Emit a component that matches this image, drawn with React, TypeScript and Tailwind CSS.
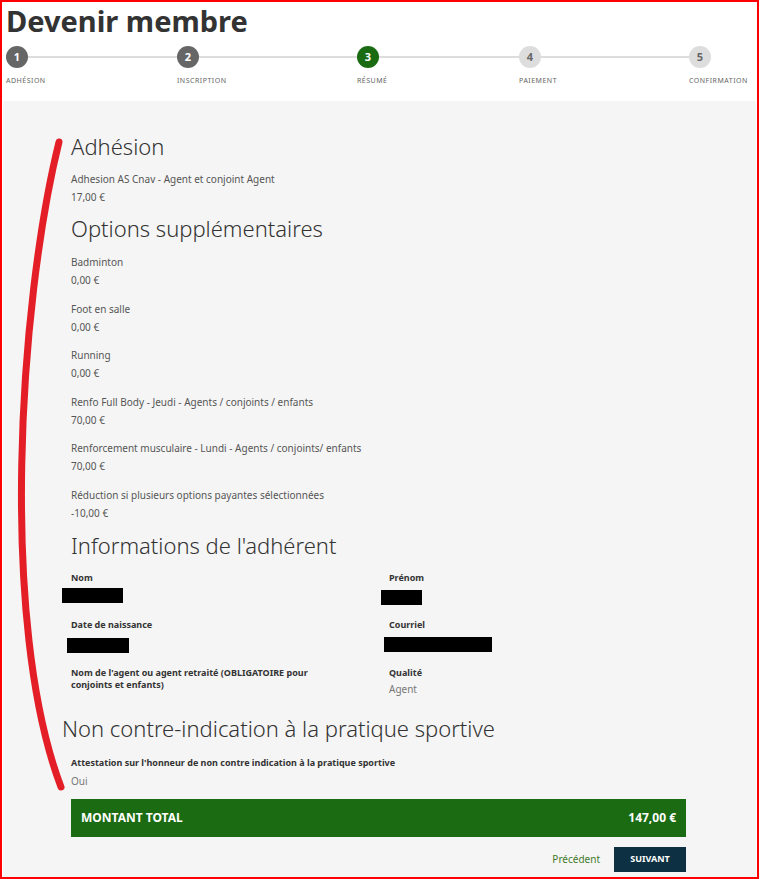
import React from 'react'

const steps = [
  { n: 1, label: 'ADHÉSION', w: 'w-[42px]', state: 'done' },
  { n: 2, label: 'INSCRIPTION', w: 'w-[51px]', state: 'done' },
  { n: 3, label: 'RÉSUMÉ', w: 'w-[33px]', state: 'active' },
  { n: 4, label: 'PAIEMENT', w: 'w-[41px]', state: 'todo' },
  { n: 5, label: 'CONFIRMATION', w: 'w-[62px]', state: 'todo' },
]

const options = [
  { label: 'Badminton', price: '0,00 €' },
  { label: 'Foot en salle', price: '0,00 €' },
  { label: 'Running', price: '0,00 €' },
  { label: 'Renfo Full Body - Jeudi - Agents / conjoints / enfants', price: '70,00 €' },
  { label: 'Renforcement musculaire - Lundi - Agents / conjoints/ enfants', price: '70,00 €' },
  { label: 'Réduction si plusieurs options payantes sélectionnées', price: '-10,00 €' },
]

const Item = ({ label, price }: { label: string; price: string }) => (
  <div className="mb-[10.6px]">
    <div className="h-[18px] leading-[18px] text-[10px] text-[#555]">{label}</div>
    <div className="h-[18px] leading-[18px] text-[10px] text-[#555]">{price}</div>
  </div>
)

const Heading = ({ children, className = '' }: { children: React.ReactNode; className?: string }) => (
  <h2 className={`text-[22px] font-light leading-[30px] text-[#333] ${className}`}>{children}</h2>
)

const Field = ({ label, children }: { label: React.ReactNode; children?: React.ReactNode }) => (
  <div className="mb-[14px]">
    <div className="text-[9px] font-bold leading-[12px] text-[#333]">{label}</div>
    {children}
  </div>
)

const Redacted = ({ w, ml, mt = 'mt-[5px]' }: { w: string; ml: string; mt?: string }) => (
  <div className={`h-[15px] bg-black ${w} ${ml} ${mt}`} />
)

export default function App() {
  return (
    <div className="relative w-[759px] h-[879px] border-2 border-[#ff0000] bg-white font-['Noto_Sans',sans-serif] overflow-hidden">
      {/* header */}
      <div className="px-[4px] pt-[1px]">
        <h1 className="text-[29px] font-bold leading-[36px] text-[#333]">Devenir membre</h1>
        <div className="relative mt-[7px] flex justify-between pr-[2px]">
          <div className="absolute left-[12px] right-[50px] top-[10px] h-[2px] bg-[#ddd]" />
          {steps.map((s) => (
            <div key={s.n} className={`relative flex flex-col ${s.w}`}>
              <div
                className={`flex h-[22px] w-[22px] items-center justify-center rounded-full text-[11px] font-bold ${
                  s.state === 'done'
                    ? 'bg-[#666] text-white'
                    : s.state === 'active'
                    ? 'bg-[#1a6b12] text-white'
                    : 'bg-[#ddd] text-[#666]'
                }`}
              >
                {s.n}
              </div>
              <div className="mt-[8px] whitespace-nowrap text-[7px] tracking-[0.5px] text-[#666]">{s.label}</div>
            </div>
          ))}
        </div>
      </div>

      {/* summary panel */}
      <div className="mx-[1px] mt-[14px] h-[780px] bg-[#f5f5f5] pl-[68px] pr-[70px] pt-[30px]">
        <Heading>Adhésion</Heading>
        <div className="mt-[9px]">
          <Item label="Adhesion AS Cnav - Agent et conjoint Agent" price="17,00 €" />
        </div>
        <Heading className="-mt-[3px]">Options supplémentaires</Heading>
        <div className="mt-[10px]">
          {options.map((o) => (
            <Item key={o.label} label={o.label} price={o.price} />
          ))}
        </div>
        <Heading className="-mt-[3px]">Informations de l'adhérent</Heading>
        <div className="mt-[12px] grid grid-cols-[318px_1fr]">
          <Field label="Nom">
            <Redacted w="w-[61px]" ml="-ml-[9px]" mt="mt-[4px]" />
          </Field>
          <Field label="Prénom">
            <Redacted w="w-[41px]" ml="-ml-[8px]" mt="mt-[6px]" />
          </Field>
          <Field label="Date de naissance">
            <Redacted w="w-[62px]" ml="-ml-[4px]" mt="mt-[7px]" />
          </Field>
          <Field label="Courriel">
            <Redacted w="w-[108px]" ml="-ml-[5px]" mt="mt-[6px]" />
          </Field>
          <Field label={<>Nom de l'agent ou agent retraité (OBLIGATOIRE pour<br />conjoints et enfants)</>} />
          <Field label="Qualité">
            <div className="mt-[4px] text-[10px] leading-[12px] text-[#777]">Agent</div>
          </Field>
        </div>
        <Heading className="-ml-[9px] mt-[4px]">Non contre-indication à la pratique sportive</Heading>
        <div className="mt-[14px] text-[9px] font-bold leading-[12px] text-[#333]">
          Attestation sur l'honneur de non contre indication à la pratique sportive
        </div>
        <div className="mt-[6px] text-[10px] leading-[12px] text-[#777]">Oui</div>
        <div className="mt-[12px] flex h-[38px] items-center justify-between bg-[#1a6b12] px-[10px] text-[12px] font-bold text-white">
          <span>MONTANT TOTAL</span>
          <span>147,00 €</span>
        </div>
        <div className="mt-[10px] flex items-center justify-end gap-[14px]">
          <span className="text-[10px] text-[#3f7a2a]">Précédent</span>
          <button className="h-[25px] w-[72px] bg-[#0d3142] text-[9px] font-bold text-white">SUIVANT</button>
        </div>
      </div>

      {/* hand-drawn annotation */}
      <svg className="pointer-events-none absolute left-0 top-0" width="759" height="879" viewBox="-2 -2 759 879">
        <path
          d="M55 138 C 15 300, -5 620, 57 783"
          fill="none"
          stroke="#e41e26"
          strokeWidth="7"
          strokeLinecap="round"
        />
      </svg>
    </div>
  )
}
